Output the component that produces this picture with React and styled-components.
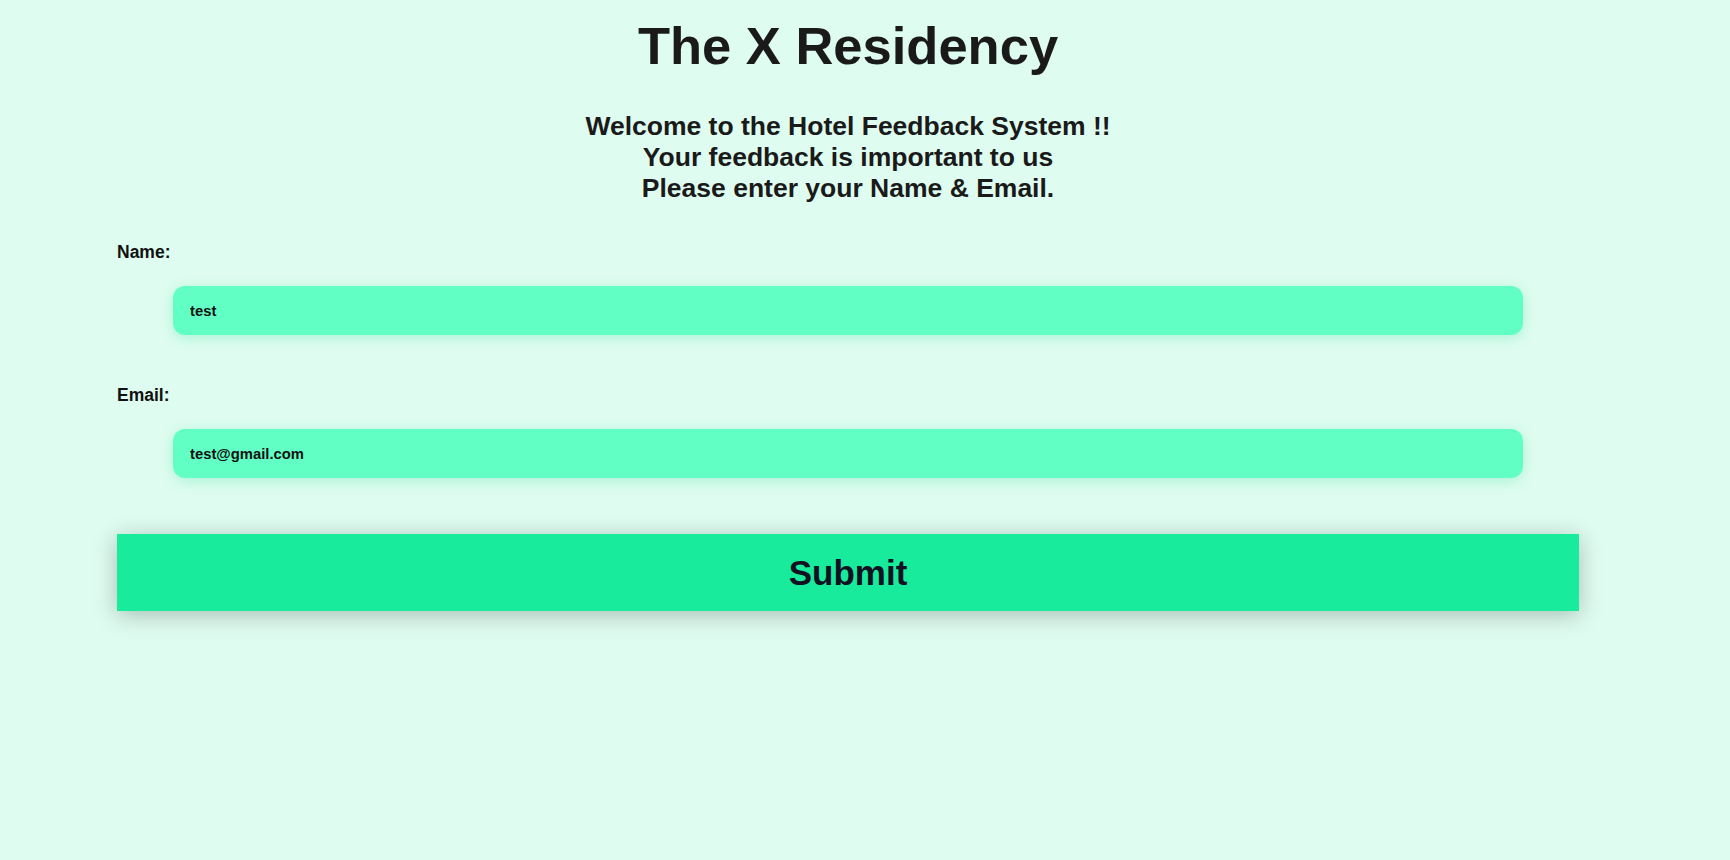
import React, {useState} from 'react'
import styled, {createGlobalStyle} from 'styled-components'

const GlobalStyle = createGlobalStyle`
    html, body {
        margin: 0;
        padding: 0;
        background: #dffcf0;
        font-family: Arial, "Liberation Sans", sans-serif;
        color: #1a1a1a;
    }
`
const Page = styled.div`
    min-height: 860px;
    padding: 16px 0 0 117px;
    box-sizing: border-box;
`
const Container = styled.div`
    width: 1462px;
    display: flex;
    flex-direction: column;
`
const Title = styled.h1`
    margin: 0;
    text-align: center;
    font-size: 52.5px;
    line-height: 60px;
    font-weight: bold;
    color: #1a1a1a;
`
const Intro = styled.h2`
    margin: 35px 0 0;
    text-align: center;
    font-size: 26.5px;
    line-height: 31px;
    font-weight: bold;
    color: #1a1a1a;
`
const Form = styled.form`
    display: flex;
    flex-direction: column;
    margin-top: 38px;
`
const Label = styled.label`
    display: block;
    font-size: 17.5px;
    line-height: 20px;
    font-weight: bold;
    color: #111;
    margin-top: ${p => (p.$first ? '0' : '50px')};
`
const Input = styled.input`
    display: block;
    box-sizing: border-box;
    margin: 24px 56px 0;
    height: 49px;
    padding: 0 17px;
    border: none;
    outline: none;
    border-radius: 12px;
    background: #62ffc4;
    box-shadow: 0 3px 14px rgba(70, 230, 170, 0.35);
    font-family: Arial, "Liberation Sans", sans-serif;
    font-size: 14.8px;
    font-weight: bold;
    color: #111;
`
const SubmitButton = styled.button`
    margin-top: 56px;
    height: 77px;
    border: none;
    background: #18eb9c;
    box-shadow: 0 4px 22px rgba(0, 0, 0, 0.25);
    font-family: Arial, "Liberation Sans", sans-serif;
    font-size: 35px;
    font-weight: bold;
    color: #112;
    cursor: pointer;
`

export default function App() {
    const [name, setName] = useState('test')
    const [email, setEmail] = useState('test@gmail.com')

    return (
        <Page>
            <GlobalStyle />
            <Container>
                <Title>The X Residency</Title>
                <Intro>
                    Welcome to the Hotel Feedback System !!
                    <br />
                    Your feedback is important to us
                    <br />
                    Please enter your Name &amp; Email.
                </Intro>
                <Form onSubmit={e => e.preventDefault()}>
                    <Label $first htmlFor="name">Name:</Label>
                    <Input id="name" value={name} onChange={e => setName(e.target.value)} />
                    <Label htmlFor="email">Email:</Label>
                    <Input id="email" value={email} onChange={e => setEmail(e.target.value)} />
                    <SubmitButton type="submit">Submit</SubmitButton>
                </Form>
            </Container>
        </Page>
    )
}
